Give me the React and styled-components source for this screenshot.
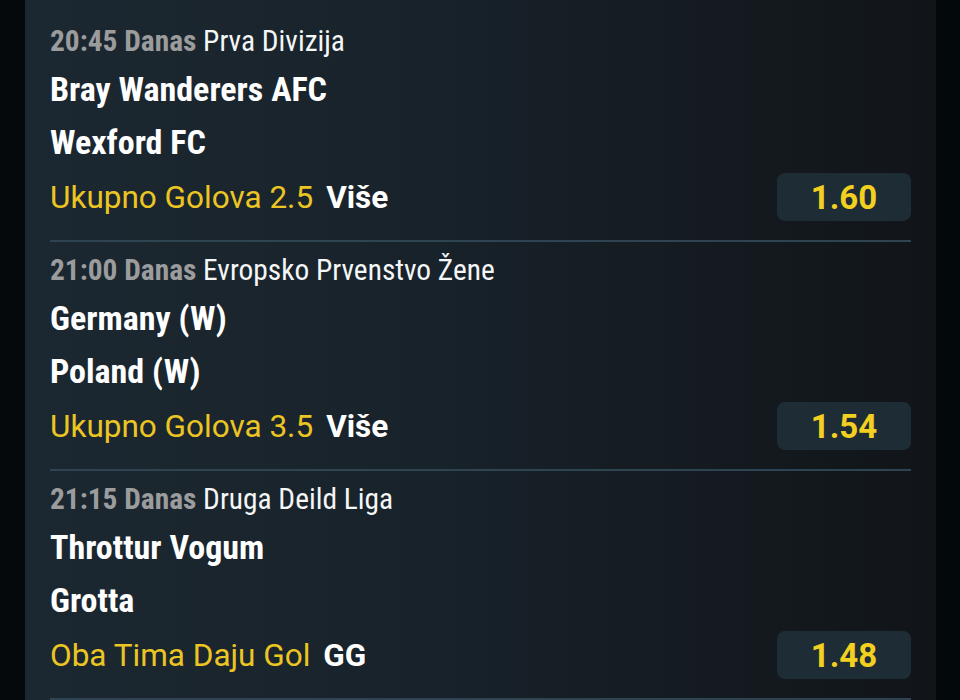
import styled, { createGlobalStyle } from "styled-components";

const GlobalStyle = createGlobalStyle`
    html, body {
        margin: 0;
        padding: 0;
        background: #03080b;
    }
    body {
        font-family: 'Roboto', 'Liberation Sans', sans-serif;
    }
`;

const matches = [
    {
        time: "20:45",
        day: "Danas",
        league: "Prva Divizija",
        home: "Bray Wanderers AFC",
        away: "Wexford FC",
        market: "Ukupno Golova 2.5",
        pick: "Više",
        odds: "1.60",
    },
    {
        time: "21:00",
        day: "Danas",
        league: "Evropsko Prvenstvo Žene",
        home: "Germany (W)",
        away: "Poland (W)",
        market: "Ukupno Golova 3.5",
        pick: "Više",
        odds: "1.54",
    },
    {
        time: "21:15",
        day: "Danas",
        league: "Druga Deild Liga",
        home: "Throttur Vogum",
        away: "Grotta",
        market: "Oba Tima Daju Gol",
        pick: "GG",
        odds: "1.48",
    },
];

function Match({ time, day, league, home, away, market, pick, odds }) {
    return (
        <Block>
            <Header>
                <When>{time} {day}</When> {league}
            </Header>
            <Team $gap={4}>{home}</Team>
            <Team $gap={1}>{away}</Team>
            <MarketRow>
                <Market>
                    {market}
                    <Pick>{pick}</Pick>
                </Market>
                <Odds>{odds}</Odds>
            </MarketRow>
        </Block>
    );
}

export default function App() {
    return (
        <Page>
            <GlobalStyle />
            <Panel>
                {matches.map((m) => (
                    <Match key={m.time} {...m} />
                ))}
            </Panel>
        </Page>
    );
}

const Page = styled.div`
    display: flex;
    width: 960px;
    height: 700px;
    overflow: hidden;
    background: linear-gradient(90deg, #05090c 0%, #03080b 100%);
`;

const Panel = styled.div`
    flex: 1;
    margin: 0 24px 0 25px;
    padding: 13px 25px 0 25px;
    background: linear-gradient(90deg, #1c2831 0%, #18222a 45%, #12171b 90%, #111519 100%);
`;

const Block = styled.div`
    display: flex;
    flex-direction: column;
    padding: 10px 0 19px;
    border-bottom: 2px solid #2f4452;
`;

const Header = styled.div`
    height: 36px;
    line-height: 36px;
    font-family: 'Roboto Condensed', 'Roboto', sans-serif;
    font-stretch: 75%;
    font-size: 29.4px;
    color: #f4f6f7;
    white-space: nowrap;
`;

const When = styled.span`
    font-weight: 700;
    color: #9b9c9d;
`;

const Team = styled.div`
    height: 52px;
    line-height: 52px;
    margin-top: ${(p) => p.$gap}px;
    font-family: 'Roboto Condensed', 'Roboto', sans-serif;
    font-stretch: 75%;
    font-size: 34px;
    font-weight: 700;
    color: #ffffff;
    white-space: nowrap;
`;

const MarketRow = styled.div`
    display: flex;
    align-items: center;
    justify-content: space-between;
    height: 48px;
    margin-top: 5px;
`;

const Market = styled.div`
    font-size: 31.5px;
    color: #ecc523;
    white-space: nowrap;
`;

const Pick = styled.span`
    margin-left: 13px;
    font-weight: 700;
    color: #ffffff;
`;

const Odds = styled.div`
    display: flex;
    align-items: center;
    justify-content: center;
    width: 134px;
    height: 48px;
    border-radius: 8px;
    background: #1e2c36;
    font-size: 33px;
    font-weight: 700;
    color: #f3d01f;
`;
